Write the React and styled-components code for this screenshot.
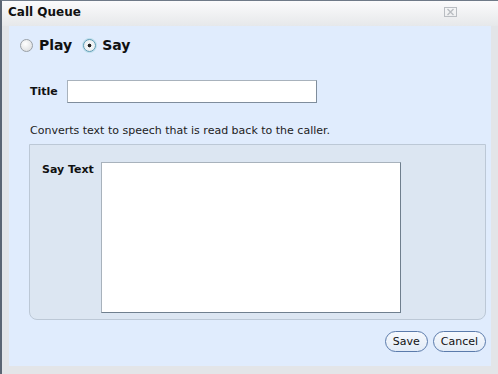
import React, { useState } from "react";
import styled, { createGlobalStyle } from "styled-components";

const Global = createGlobalStyle`
  html, body { margin: 0; padding: 0; background: #e3e5e8; }
  body { font-family: "DejaVu Sans", Verdana, sans-serif; }
`;

function App() {
  const [mode, setMode] = useState("say");

  return (
    <>
      <Global />
      <Dialog>
        <TitleBar>
          <Title>Call Queue</Title>
          <Close viewBox="0 0 13 10">
            <rect x="0.5" y="0.5" width="12" height="9" fill="none" stroke="#b9bdc2" />
            <path d="M3.5 2 L9.5 8 M9.5 2 L3.5 8" stroke="#b9bdc2" strokeWidth="1.4" />
          </Close>
        </TitleBar>
        <Body>
          <Modes>
            <ModeOption onClick={() => setMode("play")}>
              <Radio checked={mode === "play"} />
              Play
            </ModeOption>
            <ModeOption onClick={() => setMode("say")}>
              <Radio checked={mode === "say"} />
              Say
            </ModeOption>
          </Modes>
          <FieldRow>
            <Label>Title</Label>
            <TextInput />
          </FieldRow>
          <Hint>Converts text to speech that is read back to the caller.</Hint>
          <Panel>
            <Label>Say Text</Label>
            <TextArea />
          </Panel>
          <Actions>
            <Button>Save</Button>
            <Button>Cancel</Button>
          </Actions>
        </Body>
      </Dialog>
    </>
  );
}

export default App;

const Dialog = styled.div`
  width: 498px;
  height: 374px;
  box-sizing: border-box;
  border-left: 2px solid #5b6573;
  border-top: 1px solid #6f7a88;
  background: #e3e5e8;
  display: flex;
  flex-direction: column;
`;

const TitleBar = styled.div`
  height: 25px;
  display: flex;
  align-items: center;
  justify-content: space-between;
  padding: 0 41px 0 6px;
  box-sizing: border-box;
  background: linear-gradient(#fbfbfc, #e6e8ea);
`;

const Title = styled.span`
  font: bold 12px "DejaVu Sans", Verdana, sans-serif;
  color: #111;
  margin-top: -3px;
`;

const Close = styled.svg`
  width: 13px;
  height: 10px;
  margin-top: -3px;
`;

const Body = styled.div`
  margin: 0 7px 8px 7px;
  flex: 1;
  background: #e0ecfd;
  display: flex;
  flex-direction: column;
  padding: 11px 5px 0 11px;
`;

const Modes = styled.div`
  display: flex;
  gap: 11px;
  align-items: center;
`;

const ModeOption = styled.label`
  display: flex;
  align-items: center;
  gap: 6px;
  font: bold 14px "DejaVu Sans", Verdana, sans-serif;
  color: #111;
  cursor: pointer;
`;

const Radio = styled.span`
  width: 13px;
  height: 13px;
  border-radius: 50%;
  box-sizing: border-box;
  border: 1px solid ${(p) => (p.checked ? "#5e9bb4" : "#9aa0a6")};
  background: ${(p) =>
    p.checked
      ? "radial-gradient(circle, #222 0 1.6px, #f4f7f8 2.2px, #dfe6ea 100%)"
      : "radial-gradient(circle at 40% 35%, #ffffff, #d6d8da)"};
  box-shadow: ${(p) => (p.checked ? "0 0 0 1px #bfe0ec" : "none")};
`;

const FieldRow = styled.div`
  display: flex;
  align-items: center;
  margin: 27px 0 0 10px;
  gap: 9px;
`;

const Label = styled.span`
  font: bold 11px "DejaVu Sans", Verdana, sans-serif;
  color: #111;
`;

const TextInput = styled.input`
  width: 250px;
  height: 23px;
  box-sizing: border-box;
  border: 1px solid #7f8d9c;
  border-top-color: #a8b2bc;
  border-left-color: #a8b2bc;
  background: #fff;
  margin: 0;
`;

const Hint = styled.div`
  font: 11px "DejaVu Sans", Verdana, sans-serif;
  color: #222;
  margin: 21px 0 0 10px;
`;

const Panel = styled.div`
  margin: 7px 0 0 9px;
  height: 176px;
  box-sizing: border-box;
  border: 1px solid #bcc8d6;
  border-radius: 0 0 8px 8px;
  background: #dce6f2;
  display: flex;
  align-items: flex-start;
  gap: 7px;
  padding: 17px 0 0 12px;

  & > span {
    margin-top: 1px;
  }
`;

const TextArea = styled.textarea`
  width: 300px;
  height: 151px;
  box-sizing: border-box;
  resize: none;
  border: 1px solid #6f7f8e;
  border-top-color: #a8b2bc;
  border-left-color: #a8b2bc;
  background: #fff;
  margin: 0;
`;

const Actions = styled.div`
  display: flex;
  justify-content: flex-end;
  gap: 5px;
  margin-top: 11px;
`;

const Button = styled.button`
  height: 21px;
  padding: 0 7px;
  border-radius: 11px;
  border: 1.5px solid #5b7bab;
  background: linear-gradient(#f6f9fd, #e2ebf7);
  font: 11px "DejaVu Sans", Verdana, sans-serif;
  color: #111;
  cursor: pointer;
`;
